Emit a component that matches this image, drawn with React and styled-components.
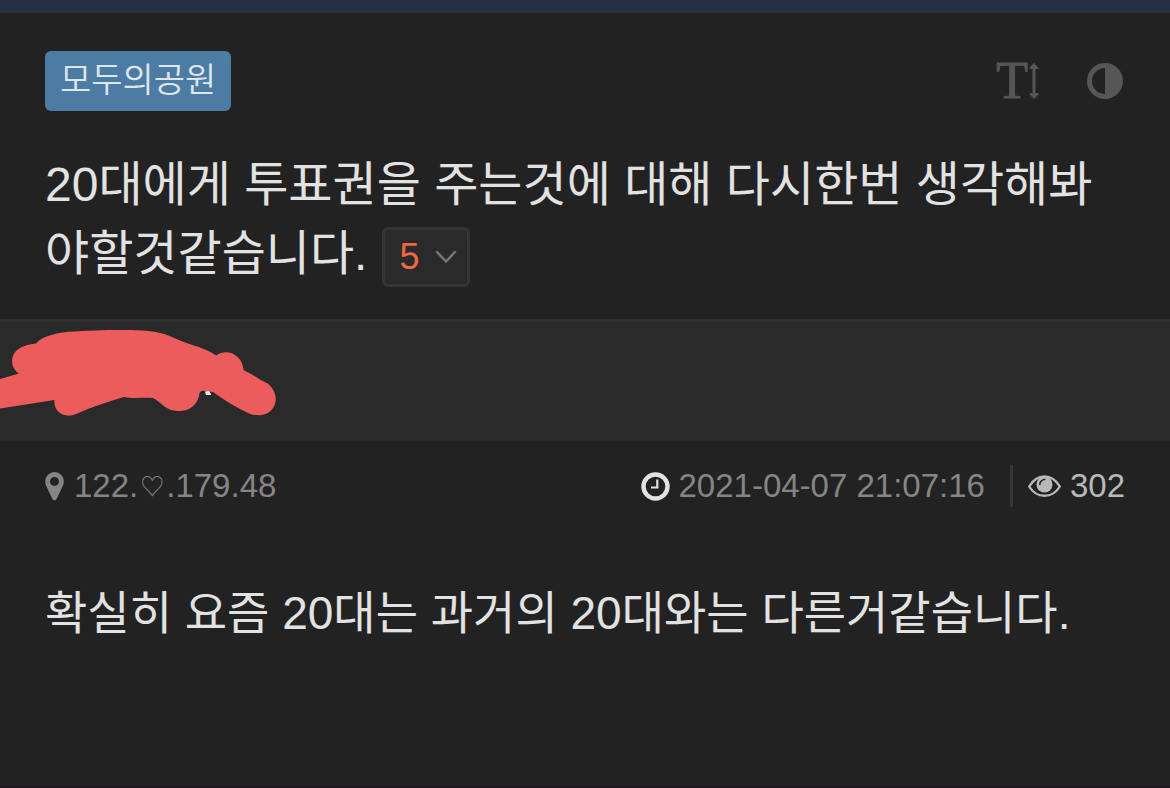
import React from "react";
import styled, { createGlobalStyle } from "styled-components";

const GlobalStyle = createGlobalStyle`
  *, *::before, *::after { box-sizing: border-box; }
  html, body, #root { height: 100%; }
  body {
    margin: 0;
    background: #222222;
    color: #e2e2e2;
    font-family: "Liberation Sans", "Noto Sans CJK KR", sans-serif;
    font-weight: 400;
  }
`;

const Page = styled.div`
  display: flex;
  flex-direction: column;
  min-height: 100%;
  border-top: 13px solid #253042;
  border-bottom: 2px solid #20191e;
`;

const PostHeader = styled.header`
  display: flex;
  flex-direction: column;
  gap: 39px;
  padding: 38px 45px 31px;
`;

const Toolbar = styled.div`
  display: flex;
  align-items: center;
  justify-content: space-between;
`;

const BoardLink = styled.a`
  display: block;
  height: 60px;
  padding: 0 15px;
  border-radius: 6px;
  background: #4c7ba3;
  color: #dfe6ec;
  font-size: 34px;
  font-weight: 350;
  line-height: 58px;
  text-decoration: none;
`;

const Tools = styled.div`
  display: flex;
  align-items: center;
  gap: 46px;
`;

const ToolButton = styled.button`
  display: flex;
  align-items: center;
  gap: 1px;
  height: 40px;
  padding: 0 2px 0 0;
  border: 0;
  background: none;
  color: #565656;
`;

const Letter = styled.span`
  font-family: "Liberation Serif", serif;
  font-size: 52px;
  line-height: 42px;
  -webkit-text-stroke: 1px currentColor;
`;

const TitleBlock = styled.div`
  font-size: 48px;
  line-height: 69px;
  word-break: break-all;
`;

const Title = styled.h1`
  display: inline;
  margin: 0;
  font: inherit;
`;

const CommentJump = styled.button`
  display: inline-flex;
  align-items: center;
  justify-content: space-between;
  width: 88px;
  height: 60px;
  margin-left: 15px;
  padding: 0 10px 0 14px;
  border: 3px solid #353535;
  border-radius: 6px;
  background: #2a2a2a;
  color: #ec6a42;
  font: inherit;
  font-size: 36px;
  line-height: 54px;
  vertical-align: middle;
`;

const Author = styled.section`
  height: 122px;
  border-top: 3px solid #303030;
  background: #2a2a2a;

  svg { display: block; }
`;

const Meta = styled.div`
  display: flex;
  align-items: center;
  justify-content: space-between;
  padding: 23px 45px 0;
  color: #858585;
  font-size: 33px;
  line-height: 44px;
`;

const MetaGroup = styled.div`
  display: flex;
  align-items: center;
`;

const MetaItem = styled.span`
  display: flex;
  align-items: center;
  gap: 9px;
  color: ${(p) => p.$color || "inherit"};
`;

const Heart = styled.span`
  padding: 0 2px;
  font-size: 24px;
  line-height: 1;
  vertical-align: 2px;
`;

const Divider = styled.span`
  width: 3px;
  height: 42px;
  margin: 0 15px 0 25px;
  background: #353535;
`;

const Body = styled.p`
  margin: 0;
  padding: 70px 45px;
  font-size: 46px;
  line-height: 70px;
`;

const ArrowIcon = () => (
  <svg width="10" height="36" viewBox="0 0 10 36" fill="currentColor" aria-hidden="true">
    <path d="M5 0 9.4 4.4V6H6.5V30H9.4V31.6L5 36 .6 31.6V30H3.5V6H.6V4.4Z" />
  </svg>
);

const ContrastIcon = () => (
  <svg width="36" height="36" viewBox="0 0 36 36" aria-hidden="true">
    <circle cx="18" cy="18" r="15.5" fill="none" stroke="currentColor" strokeWidth="5" />
    <path d="M18 4a14 14 0 0 1 0 28Z" fill="currentColor" />
  </svg>
);

const ChevronIcon = () => (
  <svg width="22" height="14" viewBox="0 0 22 14" fill="none" stroke="#777777" strokeWidth="2.5" aria-hidden="true">
    <path d="M2 2 11 11.5 20 2" strokeLinecap="round" />
  </svg>
);

const PinIcon = () => (
  <svg width="20" height="30" viewBox="0 0 20 30" fill="currentColor" aria-hidden="true">
    <path fillRule="evenodd" d="M9.5 1a9.3 9.3 0 0 1 9.3 9.3c0 3-1.2 5-2.2 7.1l-5 10.5c-.9 1.8-3.3 1.8-4.2 0l-5-10.5C1.4 15.3.2 13.3.2 10.3A9.3 9.3 0 0 1 9.5 1Zm0 4.9a4.5 4.5 0 1 0 0 9 4.5 4.5 0 0 0 0-9Z" />
  </svg>
);

const ClockIcon = () => (
  <svg width="29" height="29" viewBox="0 0 29 29" fill="none" stroke="#e2e2e2" aria-hidden="true">
    <circle cx="14.5" cy="14.5" r="12" strokeWidth="4.4" />
    <path d="M16.3 7.5V15.5H10" strokeWidth="2.2" />
  </svg>
);

const EyeIcon = () => (
  <svg width="33" height="23" viewBox="0 0 33 23" fill="none" stroke="#b9b9b9" aria-hidden="true">
    <path d="M1.2 11.5C4.5 6 9.6 1.5 16.5 1.5S28.5 6 31.8 11.5C28.5 17 23.4 20.8 16.5 20.8S4.5 17 1.2 11.5Z" strokeWidth="2.4" strokeLinejoin="round" />
    <circle cx="16.5" cy="9.5" r="8" fill="#b9b9b9" stroke="none" />
    <path d="M11.8 9.5a5 5 0 0 1 5-5" stroke="#222222" strokeWidth="1.6" strokeLinecap="round" />
  </svg>
);

const Scribble = () => (
  <svg width="280" height="100" viewBox="0 0 280 100" role="img" aria-label="작성자">
    <path
      fill="#ed5c5c"
      d="M0 57 19 51.5C14 48 12 44 12 38 13 28 22 23 36 21.5 42 14 58 10 75 9.5 90 8.5 104 8 120 8 136 8 148 8.500 158 10.500 170 13 178 18 188 21.500 200 25.500 208 28 216 33.500 228 25 243 34 243.500 48 254 53 263 60 267 61 276 68 278 78 273 86 268 94 257 95 248 91 235 85 224 78 213 70L205 69C201 68 199 70 199 74 195 88 183 91 171 88 165 86 160 80 153 76 143 75 134 77 124 75 107 80 92 85 76 92 65 97 53 90 54.5 78L0 86.5Z"
    />
    <path fill="#eeeeee" d="M205 69.5 209 69 211 72V73H206Z" />
  </svg>
);

export default function App() {
  return (
    <>
      <GlobalStyle />
      <Page>
        <PostHeader>
          <Toolbar>
            <BoardLink href="#park">모두의공원</BoardLink>
            <Tools>
              <ToolButton type="button" aria-label="글자 크기">
                <Letter>T</Letter>
                <ArrowIcon />
              </ToolButton>
              <ToolButton type="button" aria-label="화면 대비">
                <ContrastIcon />
              </ToolButton>
            </Tools>
          </Toolbar>
          <TitleBlock>
            <Title>20대에게 투표권을 주는것에 대해 다시한번 생각해봐야할것같습니다.</Title>
            <CommentJump type="button" aria-label="댓글 5">
              <span>5</span>
              <ChevronIcon />
            </CommentJump>
          </TitleBlock>
        </PostHeader>
        <Author>
          <Scribble />
        </Author>
        <Meta>
          <MetaItem>
            <PinIcon />
            <span>
              122.<Heart>♡</Heart>.179.48
            </span>
          </MetaItem>
          <MetaGroup>
            <MetaItem>
              <ClockIcon />
              <time dateTime="2021-04-07T21:07:16">2021-04-07 21:07:16</time>
            </MetaItem>
            <Divider />
            <MetaItem $color="#b9b9b9">
              <EyeIcon />
              <span>302</span>
            </MetaItem>
          </MetaGroup>
        </Meta>
        <Body>확실히 요즘 20대는 과거의 20대와는 다른거같습니다.</Body>
      </Page>
    </>
  );
}
